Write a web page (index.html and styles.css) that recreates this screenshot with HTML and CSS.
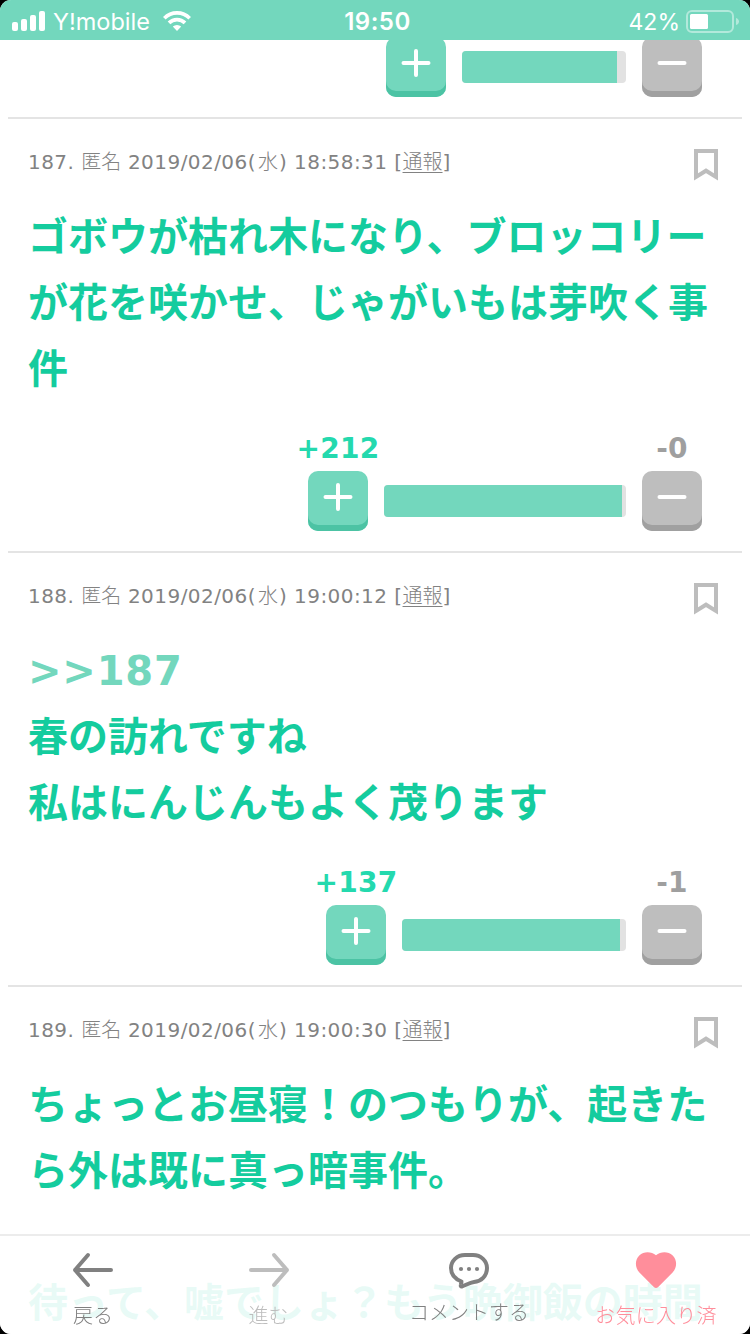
FILE: index.html
```
<!DOCTYPE html>
<html lang="ja">
  <head>
    <meta charset="utf-8">
    <title>コメント</title>
    <link rel="stylesheet" href="styles.css">
  </head>
  <body>
    <div class="screen">
      <header class="status">
        <div class="carrier">
          <svg class="signal" width="34" height="20" viewBox="0 0 34 20" fill="#fff">
            <rect x="0" y="11" width="6" height="9" rx="2"/>
            <rect x="9" y="8" width="6" height="12" rx="2"/>
            <rect x="18" y="4" width="6" height="16" rx="2"/>
            <rect x="27" y="0" width="6" height="20" rx="2"/>
          </svg>
          <span class="carrier-name">Y!mobile</span>
          <svg class="wifi" width="28" height="20" viewBox="0 0 28 20">
            <g fill="none" stroke="#fff" stroke-width="3.7">
              <path d="M1.3 7.2a18 18 0 0 1 25.4 0"/>
              <path d="M6 11.9a11.3 11.3 0 0 1 16 0"/>
            </g>
            <path d="M14 20l-4.2-4.4a6 6 0 0 1 8.4 0z" fill="#fff"/>
          </svg>
        </div>
        <div class="clock">19:50</div>
        <div class="power">
          <span class="percent">42%</span>
          <svg width="54" height="24" viewBox="0 0 54 24">
            <rect x="1" y="1" width="46" height="21" rx="5" fill="none" stroke="#fff" stroke-opacity=".45" stroke-width="2"/>
            <rect x="4" y="4" width="18" height="15" rx="1.5" fill="#fff"/>
            <path d="M50 8c4 1 4 6 0 7z" fill="#fff" fill-opacity=".45"/>
          </svg>
        </div>
      </header>

      <main class="comments">
        <article class="comment cut">
          <div class="rate">
            <div class="vote"><button class="btn plus"><svg width="30" height="30" viewBox="0 0 30 30"><path d="M2.5 15h25M15 3v24"/></svg></button></div>
            <div class="bar w1"><div class="fill" style="width:155px"></div></div>
            <div class="vote"><button class="btn minus"><svg width="30" height="30" viewBox="0 0 30 30"><path d="M2.5 15h25"/></svg></button></div>
          </div>
        </article>

        <article class="comment">
          <div class="head">
            <p class="meta">187. <span class="jp">匿名</span> 2019/02/06(<span class="jp day">水</span>) 18:58:31 [<a class="jp">通報</a>]</p>
            <svg class="bookmark" width="24" height="32" viewBox="0 0 24 32"><path d="M2 2h20v26l-10-6.3L2 28z"/></svg>
          </div>
          <p class="text">ゴボウが枯れ木になり、ブロッコリー<br>が花を咲かせ、じゃがいもは芽吹く事<br>件</p>
          <div class="rate">
            <div class="vote"><span class="count up">+212</span><button class="btn plus"><svg width="30" height="30" viewBox="0 0 30 30"><path d="M2.5 15h25M15 3v24"/></svg></button></div>
            <div class="bar w2"><div class="fill" style="width:238px"></div></div>
            <div class="vote"><span class="count">-0</span><button class="btn minus"><svg width="30" height="30" viewBox="0 0 30 30"><path d="M2.5 15h25"/></svg></button></div>
          </div>
        </article>

        <article class="comment">
          <div class="head">
            <p class="meta">188. <span class="jp">匿名</span> 2019/02/06(<span class="jp day">水</span>) 19:00:12 [<a class="jp">通報</a>]</p>
            <svg class="bookmark" width="24" height="32" viewBox="0 0 24 32"><path d="M2 2h20v26l-10-6.3L2 28z"/></svg>
          </div>
          <p class="text"><a class="anchor">&gt;&gt;187</a><br>春の訪れですね<br>私はにんじんもよく茂ります</p>
          <div class="rate">
            <div class="vote"><span class="count up">+137</span><button class="btn plus"><svg width="30" height="30" viewBox="0 0 30 30"><path d="M2.5 15h25M15 3v24"/></svg></button></div>
            <div class="bar w3"><div class="fill" style="width:218px"></div></div>
            <div class="vote"><span class="count">-1</span><button class="btn minus"><svg width="30" height="30" viewBox="0 0 30 30"><path d="M2.5 15h25"/></svg></button></div>
          </div>
        </article>

        <article class="comment">
          <div class="head">
            <p class="meta">189. <span class="jp">匿名</span> 2019/02/06(<span class="jp day">水</span>) 19:00:30 [<a class="jp">通報</a>]</p>
            <svg class="bookmark" width="24" height="32" viewBox="0 0 24 32"><path d="M2 2h20v26l-10-6.3L2 28z"/></svg>
          </div>
          <p class="text">ちょっとお昼寝！のつもりが、起きた<br>ら外は既に真っ暗事件。<br><br>待って、嘘でしょ？もう晩御飯の時間</p>
        </article>
      </main>

      <nav class="toolbar">
        <a class="tool">
          <svg width="42" height="36" viewBox="0 0 42 36" stroke="#808080"><path d="M16 3L3 18l13 15M3 18h36"/></svg>
          <span>戻る</span>
        </a>
        <a class="tool off">
          <svg width="42" height="36" viewBox="0 0 42 36" stroke="#bdbdbd"><path d="M26 3l13 15-13 15M39 18H3"/></svg>
          <span>進む</span>
        </a>
        <a class="tool talk">
          <svg width="42" height="38" viewBox="0 0 42 38" stroke="#808080">
            <path d="M17 3h8c8 0 14 6 14 13 0 8-6 13.500-13 14-4 .5-8 3-12 4.500-1 .3-1.500-.4-1.200-1.400l.7-3.600C7 27 3 22.500 3 16 3 9 9 3 17 3z"/>
            <g fill="#808080" stroke="none"><circle cx="13" cy="17" r="2.100"/><circle cx="21" cy="17" r="2.100"/><circle cx="29" cy="17" r="2.100"/></g>
          </svg>
          <span>コメントする</span>
        </a>
        <a class="tool fav">
          <svg width="42" height="36" viewBox="0 2 42 36"><path fill="#ff8e9b" d="M18.800 37L4.400 22.600C-.5 17.500 0 9.500 4.300 5.500 9 .8 16.500 1.300 21 5.300 25.500 1.300 33 .8 37.700 5.500c4.300 4 4.800 12-.1 17.100L23.200 37c-1.400 1.300-3 1.300-4.400 0z"/></svg>
          <span>お気に入り済</span>
        </a>
      </nav>
    </div>
  </body>
</html>
```
FILE: styles.css
```
* { box-sizing: border-box; }
body { margin: 0; background: #000; font-family: "DejaVu Sans", "Noto Sans CJK JP", sans-serif; }
p { margin: 0; }
svg { display: block; flex-shrink: 0; }

.screen { width: 750px; height: 1334px; overflow: hidden; background: #fff; border-radius: 11px; display: flex; flex-direction: column; }

/* status bar */
.status { flex: none; height: 40px; padding: 0 10px 0 12px; background: #73d7bd; color: #fff; display: grid; grid-template-columns: 1fr auto 1fr; align-items: center; font-family: Inter, sans-serif; font-size: 24px; line-height: 40px; }
.carrier { display: flex; align-items: center; }
.carrier-name { margin: 2px 13px 0 7px; width: 97px; font-size: 23.5px; white-space: nowrap; }
.clock { padding: 2px 0 0 3px; font-weight: 600; letter-spacing: 0.5px; }
.power { display: flex; align-items: center; justify-content: flex-end; gap: 6px; }
.power svg { margin-top: 1px; }
.percent { padding-top: 2px; font-size: 23px; }

/* comments */
.comments { flex: none; height: 1294px; padding: 0 8px; overflow: hidden; }
.comment { height: 434px; padding: 30px 24px 0 20px; border-bottom: 2px solid #e4e4e4; display: flex; flex-direction: column; }
.comment.cut { height: 79px; padding-top: 0; justify-content: flex-end; }
.head { height: 32px; display: flex; justify-content: space-between; }
.meta { margin-top: -1px; color: #828282; font-size: 20px; line-height: 26px; letter-spacing: 0.45px; white-space: nowrap; }
.jp { font-family: "Noto Sans CJK JP", sans-serif; font-weight: 300; letter-spacing: 0; }
.day { margin: 0 1px 0 2px; }
.meta a { text-decoration: underline; text-decoration-thickness: 1px; text-underline-offset: 3px; }
.bookmark path { fill: none; stroke: #bdbdbd; stroke-width: 4; }
.text { margin-top: 23px; color: #14cc9e; font-size: 40px; font-weight: 700; line-height: 66px; white-space: nowrap; }
.anchor { color: #73d7bd; letter-spacing: 0.8px; }

/* plus / minus */
.rate { margin: auto 16px 20px 0; display: flex; align-items: flex-end; justify-content: flex-end; gap: 16px; }
.vote { width: 60px; display: flex; flex-direction: column; align-items: center; }
.count { margin-bottom: 6px; color: #9f9f9f; font-size: 28px; font-weight: 700; line-height: 32px; letter-spacing: 0.3px; white-space: nowrap; }
.count.up { color: #24d9ae; }
.btn { width: 60px; height: 60px; padding: 0 0 8px; border: 0; border-radius: 10px; display: flex; align-items: center; justify-content: center; }
.btn path { fill: none; stroke: #fff; stroke-width: 4; stroke-linecap: round; }
.plus { background: #73d7bd; box-shadow: inset 0 -6px #4cc3a4; }
.minus { background: #bebebe; box-shadow: inset 0 -6px #a0a0a0; }
.bar { height: 32px; margin-bottom: 14px; border-radius: 4px; background: #e2e2e2; overflow: hidden; }
.w1 { width: 164px; }
.w2 { width: 242px; }
.w3 { width: 224px; }
.fill { height: 100%; background: #73d7bd; }

/* bottom bar lies over the scrolled comments */
.toolbar { position: fixed; left: 0; bottom: 0; width: 750px; height: 100px; background: rgba(255, 255, 255, 0.9); border-top: 2px solid #ececec; border-radius: 0 0 11px 11px; display: grid; grid-template-columns: 186px 165px 236px 138px; padding-top: 16px; }
.tool { display: flex; flex-direction: column; align-items: center; color: #808080; font-family: "Noto Sans CJK JP", sans-serif; font-size: 20px; font-weight: 300; line-height: 26px; }
.tool svg { fill: none; stroke-width: 4; stroke-linecap: round; stroke-linejoin: round; }
.tool span { margin-top: 14px; white-space: nowrap; }
.off { color: #bdbdbd; }
.talk span { margin-top: 9px; }
.fav { color: #ff8e9b; }
.fav span { margin-top: 14px; letter-spacing: 0.3px; }
```
